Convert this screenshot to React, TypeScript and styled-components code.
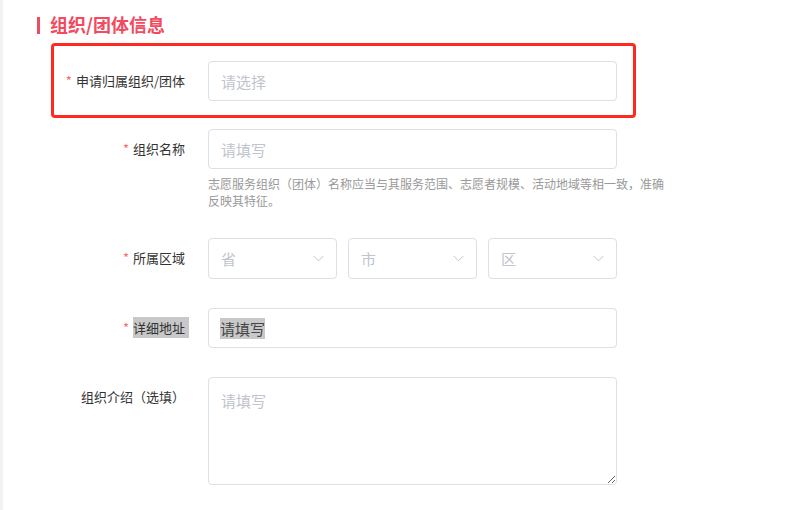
import styled, { createGlobalStyle } from 'styled-components';

const GlobalStyle = createGlobalStyle`
  html, body {
    margin: 0;
    padding: 0;
    background: #ffffff;
    font-family: "Noto Sans CJK SC", "Noto Sans", sans-serif;
  }
`;

const Page = styled.div`
  display: flex;
  min-height: 510px;
`;

const SideStrip = styled.div`
  width: 3px;
  background-color: #f2f2f2;
  flex-shrink: 0;
`;

const Content = styled.div`
  flex: 1;
  padding: 14px 0 0 34px;
`;

const TitleRow = styled.div`
  display: flex;
  align-items: center;
  height: 20px;
  margin-bottom: 27px;
`;

const TitleBar = styled.span`
  width: 3px;
  height: 17px;
  background-color: #f24a5f;
  margin-right: 10px;
  margin-top: 2px;
`;

const TitleText = styled.h2`
  margin: 0;
  font-size: 18px;
  line-height: 20px;
  font-weight: bold;
  color: #f24a5f;
`;

const Form = styled.div`
  display: flex;
  flex-direction: column;
  margin-left: -17px;
`;

const FormItem = styled.div<{ $highlight?: boolean }>`
  position: relative;
  display: flex;
  width: 597px;
  margin-bottom: ${(p) => (p.$highlight ? '28px' : '29px')};
`;

const HighlightFrame = styled.div`
  position: absolute;
  top: -18px;
  bottom: -17px;
  left: 31px;
  right: -19px;
  border: 3px solid #ff2a1f;
  border-radius: 4px;
  pointer-events: none;
`;

const Label = styled.label`
  width: 188px;
  flex-shrink: 0;
  box-sizing: border-box;
  padding-right: 23px;
  text-align: right;
  font-size: 13px;
  line-height: 40px;
  color: #333333;
  white-space: nowrap;
`;

const Required = styled.span`
  color: #f56c6c;
  margin-right: 4px;
`;

const Selected = styled.span`
  background-color: #c8c8c8;
  padding: 1px 4px 1px 0;
  margin-right: -4px;
  color: #333333;
`;

const Field = styled.div`
  width: 409px;
  flex-shrink: 0;
  display: flex;
  flex-direction: column;
`;

const TextInput = styled.input`
  box-sizing: border-box;
  width: 100%;
  height: 40px;
  padding: 0 12px;
  border: 1px solid #dcdfe6;
  border-radius: 4px;
  font-family: inherit;
  font-size: 15px;
  color: #333333;
  outline: none;
  &::placeholder {
    color: #c0c4cc;
  }
`;

const FakeInput = styled.div`
  box-sizing: border-box;
  width: 100%;
  height: 40px;
  padding: 0 11px;
  border: 1px solid #dcdfe6;
  border-radius: 4px;
  display: flex;
  align-items: center;
  font-size: 15px;
`;

const SelectedText = styled.span`
  background-color: #c8c8c8;
  color: #444444;
  line-height: 21px;
`;

const Help = styled.div`
  width: 460px;
  margin-top: 6px;
  font-size: 12px;
  line-height: 17px;
  color: #999999;
`;

const SelectGroup = styled.div`
  display: grid;
  grid-template-columns: repeat(3, 1fr);
  gap: 11px;
`;

const Select = styled.div`
  box-sizing: border-box;
  height: 41px;
  padding: 0 12px;
  border: 1px solid #dcdfe6;
  border-radius: 4px;
  display: flex;
  align-items: center;
  justify-content: space-between;
  font-size: 15px;
  color: #c0c4cc;
`;

const TextArea = styled.textarea`
  box-sizing: border-box;
  width: 100%;
  height: 108px;
  padding: 12px 12px;
  border: 1px solid #dcdfe6;
  border-radius: 4px;
  font-family: inherit;
  font-size: 15px;
  line-height: 22px;
  outline: none;
  resize: vertical;
  &::placeholder {
    color: #c0c4cc;
  }
`;

function Chevron() {
  return (
    <svg width="11" height="7" viewBox="0 0 11 7" fill="none">
      <path d="M0.5 0.8 L5.5 5.8 L10.5 0.8" stroke="#c0c4cc" strokeWidth="1" />
    </svg>
  );
}

export default function App() {
  return (
    <Page>
      <GlobalStyle />
      <SideStrip />
      <Content>
        <TitleRow>
          <TitleBar />
          <TitleText>组织/团体信息</TitleText>
        </TitleRow>
        <Form>
          <FormItem $highlight>
            <HighlightFrame />
            <Label>
              <Required>*</Required>申请归属组织/团体
            </Label>
            <Field>
              <TextInput placeholder="请选择" readOnly />
            </Field>
          </FormItem>

          <FormItem>
            <Label>
              <Required>*</Required>组织名称
            </Label>
            <Field>
              <TextInput placeholder="请填写" />
              <Help>
                志愿服务组织（团体）名称应当与其服务范围、志愿者规模、活动地域等相一致，准确反映其特征。
              </Help>
            </Field>
          </FormItem>

          <FormItem>
            <Label>
              <Required>*</Required>所属区域
            </Label>
            <Field>
              <SelectGroup>
                {['省', '市', '区'].map((p) => (
                  <Select key={p}>
                    <span>{p}</span>
                    <Chevron />
                  </Select>
                ))}
              </SelectGroup>
            </Field>
          </FormItem>

          <FormItem>
            <Label>
              <Required>*</Required>
              <Selected>详细地址</Selected>
            </Label>
            <Field>
              <FakeInput>
                <SelectedText>请填写</SelectedText>
              </FakeInput>
            </Field>
          </FormItem>

          <FormItem>
            <Label>组织介绍（选填）</Label>
            <Field>
              <TextArea placeholder="请填写" />
            </Field>
          </FormItem>
        </Form>
      </Content>
    </Page>
  );
}
